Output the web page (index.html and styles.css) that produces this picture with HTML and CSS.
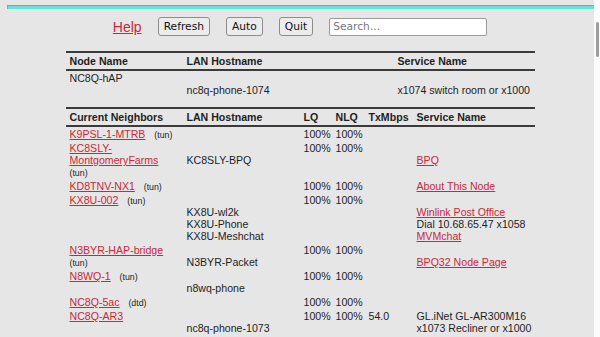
FILE: index.html
```html
<!DOCTYPE html>
<html lang="en">
<head>
    <meta charset="UTF-8">
    <meta name="viewport" content="width=device-width, initial-scale=1.0">
    <title>NC8Q-hAP mesh status</title>
    <link rel="stylesheet" href="styles.css">
</head>
<body>
    <div class="topline"></div>

    <!-- Toolbar -->
    <div class="toolbar">
        <a href="#" class="help">Help</a>
        <button>Refresh</button>
        <button>Auto</button>
        <button>Quit</button>
        <input type="text" placeholder="Search...">
    </div>

    <!-- This node -->
    <table class="grid node">
        <colgroup>
            <col style="width: 117px">
            <col style="width: 211px">
            <col style="width: 141px">
        </colgroup>
        <tr>
            <th>Node Name</th>
            <th>LAN Hostname</th>
            <th>Service Name</th>
        </tr>
        <tr>
            <td class="name">NC8Q-hAP</td>
            <td><br>nc8q-phone-1074</td>
            <td><br>x1074 switch room or x1000</td>
        </tr>
    </table>

    <!-- Neighbors -->
    <table class="grid">
        <colgroup>
            <col style="width: 117px">
            <col style="width: 117px">
            <col style="width: 32px">
            <col style="width: 33px">
            <col style="width: 48px">
            <col style="width: 122px">
        </colgroup>
        <tr>
            <th>Current Neighbors</th>
            <th>LAN Hostname</th>
            <th>LQ</th>
            <th>NLQ</th>
            <th>TxMbps</th>
            <th>Service Name</th>
        </tr>
        <tr>
            <td class="name"><a href="#">K9PSL-1-MTRB</a>&nbsp;&nbsp; <small>(tun)</small></td>
            <td></td>
            <td>100%</td>
            <td>100%</td>
            <td></td>
            <td></td>
        </tr>
        <tr>
            <td class="name"><a href="#">KC8SLY-MontgomeryFarms</a>&nbsp;&nbsp; <small>(tun)</small></td>
            <td><br>KC8SLY-BPQ</td>
            <td>100%</td>
            <td>100%</td>
            <td></td>
            <td><br><a href="#">BPQ</a></td>
        </tr>
        <tr>
            <td class="name"><a href="#">KD8TNV-NX1</a>&nbsp;&nbsp; <small>(tun)</small></td>
            <td></td>
            <td>100%</td>
            <td>100%</td>
            <td></td>
            <td><a href="#">About This Node</a></td>
        </tr>
        <tr>
            <td class="name"><a href="#">KX8U-002</a>&nbsp;&nbsp; <small>(tun)</small></td>
            <td><br>KX8U-wl2k<br>KX8U-Phone<br>KX8U-Meshchat</td>
            <td>100%</td>
            <td>100%</td>
            <td></td>
            <td><br><a href="#">Winlink Post Office</a><br>Dial 10.68.65.47 x1058<br><a href="#">MVMchat</a></td>
        </tr>
        <tr>
            <td class="name"><a href="#">N3BYR-HAP-bridge</a>&nbsp;&nbsp; <small>(tun)</small></td>
            <td><br>N3BYR-Packet</td>
            <td>100%</td>
            <td>100%</td>
            <td></td>
            <td><br><a href="#">BPQ32 Node Page</a></td>
        </tr>
        <tr>
            <td class="name"><a href="#">N8WQ-1</a>&nbsp;&nbsp; <small>(tun)</small></td>
            <td><br>n8wq-phone</td>
            <td>100%</td>
            <td>100%</td>
            <td></td>
            <td></td>
        </tr>
        <tr>
            <td class="name"><a href="#">NC8Q-5ac</a>&nbsp;&nbsp; <small>(dtd)</small></td>
            <td></td>
            <td>100%</td>
            <td>100%</td>
            <td></td>
            <td></td>
        </tr>
        <tr>
            <td class="name"><a href="#">NC8Q-AR3</a></td>
            <td><br>nc8q-phone-1073</td>
            <td>100%</td>
            <td>100%</td>
            <td>54.0</td>
            <td>GL.iNet GL-AR300M16<br>x1073 Recliner or x1000</td>
        </tr>
    </table>

    <div class="scrollbar"><div class="thumb"></div></div>
</body>
</html>
```

FILE: styles.css
```css
html {
    background-color: #e6e6e6;
}

body {
    margin: 0;
    font-family: "Liberation Sans", Arial, sans-serif;
    font-size: 10.6px;
    color: #1e1e1e;
}

a {
    color: #c8283a;
}

.topline {
    margin: 5px 6px 0 7px;
    height: 3px;
    border-top: 1px solid #9a9a9a;
    border-left: 1px solid #9a9a9a;
    background-color: #66e2dc;
}

.toolbar {
    display: flex;
    justify-content: center;
    align-items: center;
    gap: 16px;
    margin-top: 8px;
    height: 19px;
}

.help {
    font-size: 14px;
}

.toolbar button {
    height: 19px;
    padding: 0 5px;
    font-family: "DejaVu Sans", sans-serif;
    font-size: 10.7px;
    color: #111;
    background-color: #ececec;
    border: 1px solid #8d8d8d;
    border-radius: 3px;
}

.toolbar input {
    box-sizing: border-box;
    width: 158px;
    height: 18px;
    padding: 0 3px;
    font-family: "DejaVu Sans", sans-serif;
    font-size: 10.7px;
    background-color: #fff;
    border: 1px solid #9a9a9a;
    border-radius: 2px;
}

.toolbar input::placeholder {
    color: #777;
}

.grid {
    width: 469px;
    margin: 0 auto;
    border-collapse: collapse;
    table-layout: fixed;
}

.grid.node {
    margin-top: 15px;
    margin-bottom: 10px;
}

.grid th {
    text-align: left;
    padding: 2px 0 2px 4px;
    border-top: 2px solid #3a3a3a;
    border-bottom: 2px solid #3a3a3a;
    white-space: nowrap;
}

.grid td {
    padding: 1px 0 1px 4px;
    vertical-align: top;
    white-space: nowrap;
}

.grid td.name {
    white-space: normal;
    padding-right: 4px;
}

.grid small {
    font-size: 8.8px;
}

.scrollbar {
    position: fixed;
    top: 0;
    right: 0;
    width: 6px;
    height: 100%;
    background-color: #fbfbfb;
}

.thumb {
    position: absolute;
    top: 22px;
    left: 2px;
    width: 3px;
    height: 35px;
    border-radius: 2px;
    background-color: #9d9d9d;
}
```
